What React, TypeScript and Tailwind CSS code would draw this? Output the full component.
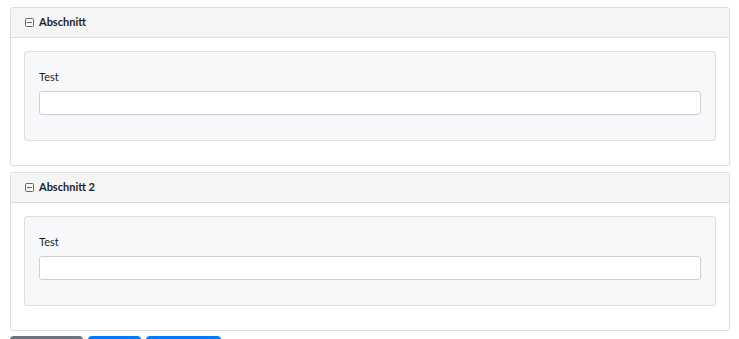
import { FC } from 'react';

const MinusSquare: FC = () => (
    <svg width="9" height="9" viewBox="0 0 9 9" className="shrink-0">
        <rect x="0.5" y="0.5" width="8" height="8" rx="1" fill="none" stroke="#6f6363" strokeWidth="1" />
        <line x1="2" y1="4.5" x2="7" y2="4.5" stroke="#6f6363" strokeWidth="1" />
    </svg>
);

const Section: FC<{ title: string }> = ({ title }) => {
    return (
        <div className="border border-[#dedede] rounded-[3px] bg-white">
            <div className="h-[30px] bg-[#f5f5f5] border-b border-[#dcdcdc] flex items-center gap-[5px] pl-[14px] rounded-t-[3px]">
                <MinusSquare />
                <span className="text-[11px] font-bold text-[#1d1d2b]">{title}</span>
            </div>
            <div className="pt-[13px] px-[13px] pb-[24px]">
                <div className="bg-[#f7f8fa] border border-[#dcdee2] rounded-[3px] pt-[18px] px-[14px] pb-[25px]">
                    <label className="block text-[11px] text-[#1d1d2b] leading-[14px] mb-[7px]">Test</label>
                    <input
                        type="text"
                        className="block w-full h-[24px] bg-white border border-[#ccd0d6] rounded-[3px] outline-none"
                    />
                </div>
            </div>
        </div>
    );
};

export default function App() {
    return (
        <div className="px-[10px] pt-[7px] font-['Lato','Open_Sans',sans-serif] bg-white min-h-[339px]">
            <div className="flex flex-col gap-[6px] w-[720px]">
                <Section title="Abschnitt" />
                <Section title="Abschnitt 2" />
            </div>
            <div className="flex gap-[5px] mt-[5px]">
                <button className="w-[73px] h-[30px] rounded-[4px] bg-[#6c757d]" />
                <button className="w-[53px] h-[30px] rounded-[4px] bg-[#007bff]" />
                <button className="w-[75px] h-[30px] rounded-[4px] bg-[#007bff]" />
            </div>
        </div>
    );
}
